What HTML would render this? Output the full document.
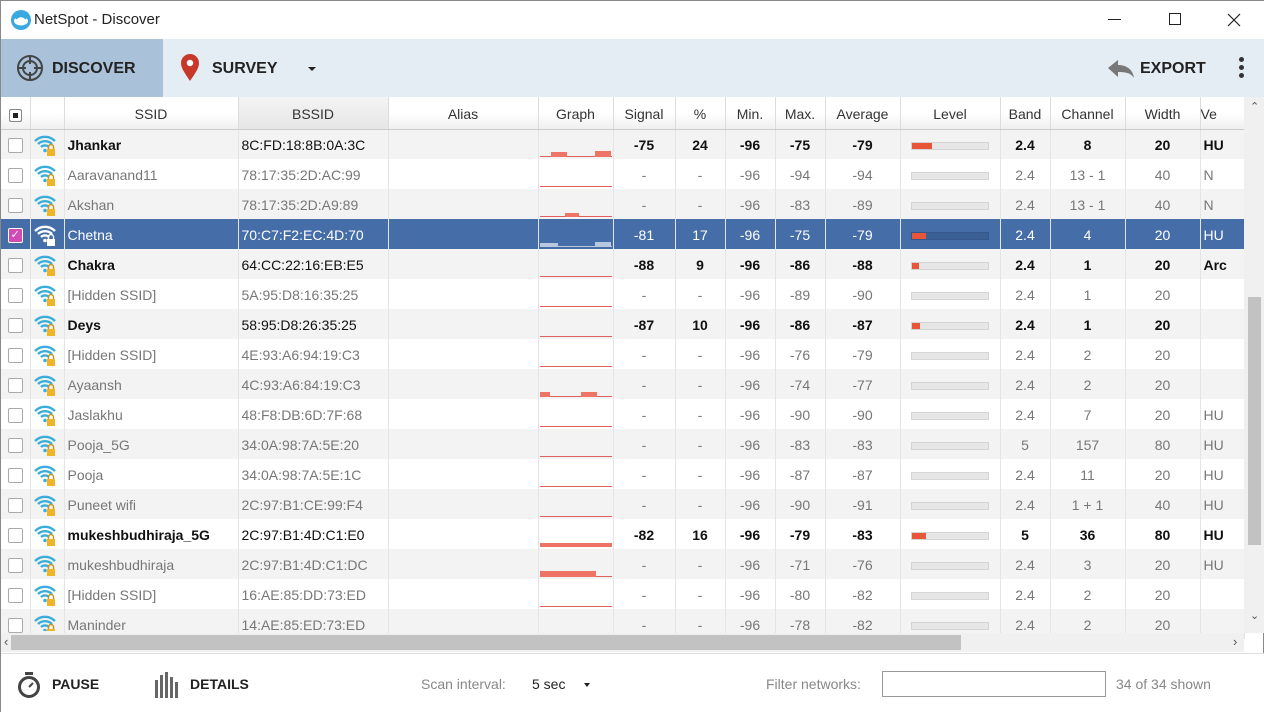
<!DOCTYPE html>
<html><head><meta charset="utf-8">
<style>
*{box-sizing:border-box;margin:0;padding:0}
body{width:1264px;height:712px;overflow:hidden;background:#fff;font-family:"Liberation Sans",sans-serif;position:relative;border:1px solid #888}
.title{position:absolute;left:0;top:0;width:1264px;height:38px;background:#fff}
.title .t{position:absolute;left:33px;top:10px;font-size:15px;color:#222}
.tb{position:absolute;left:0;top:38px;width:1264px;height:58px;background:#e4ecf4}
.disc{position:absolute;left:0;top:0;width:162px;height:58px;background:#a9c2da}
.tbt{position:absolute;top:21px;font-size:16px;font-weight:bold;color:#222}
table{position:absolute;left:0;top:96px;width:1243px;table-layout:fixed;border-collapse:collapse;font-size:14px}
th{height:32px;font-weight:normal;color:#333;background:linear-gradient(#fff 0,#fff 50%,#f0f0f0 100%);border-right:1px solid #ddd;border-bottom:1px solid #ccc;padding-top:3px}
th.s{background:linear-gradient(#f4f4f4,#e6e6e6)}
td{height:30px;border-right:1px solid #e4e4e4;text-align:center;color:#777;white-space:nowrap;overflow:hidden;padding-top:1px}
td.l{text-align:left;padding-left:3px}
tr.a td{color:#111;font-weight:bold}
tr.a td.l{font-weight:bold}
tr.a td.b{font-weight:normal}
tr:nth-child(even) td{background:#f3f3f3}
tr.sel td{background:#456ea9!important;color:#fff!important;font-weight:normal!important}
.cb{display:inline-block;width:15px;height:15px;border:1px solid #aaa;border-radius:2px;background:#fff;vertical-align:middle}
.lv{display:inline-block;width:78px;height:8px;background:#e6e6e6;border:1px solid #d4d4d4;vertical-align:middle;position:relative}
.lv i{position:absolute;left:0;top:0;height:6px;background:#e8563a}
.g{position:relative;height:28px}
.g i{position:absolute;left:1px;right:1px;bottom:2px;height:1px;background:#e06060}
.g b{position:absolute;bottom:2px;background:#ee7565}
.hs{position:absolute;left:0;top:632px;width:1243px;height:19px;background:#f0f0f0}
.vs{position:absolute;left:1243px;top:96px;width:21px;height:536px;background:#f0f0f0}
.bot{position:absolute;left:0;top:652px;width:1264px;height:60px;background:#fff;border-top:1px solid #ddd;font-size:14px}
td:nth-child(2){font-size:0}
</style></head><body>
<div class="title">
<svg style="position:absolute;left:9px;top:8px" width="22" height="22" viewBox="0 0 22 22"><circle cx="11" cy="11" r="10" fill="#3aa8e0"/><ellipse cx="11" cy="12" rx="7" ry="4.5" fill="#fff"/><path d="M6 10q5-5 10 0" stroke="#3aa8e0" stroke-width="1.5" fill="none"/></svg>
<div class="t">NetSpot - Discover</div>
<div style="position:absolute;left:1107px;top:18px;width:13px;height:1px;background:#222"></div>
<div style="position:absolute;left:1168px;top:12px;width:12px;height:12px;border:1px solid #222"></div>
<svg style="position:absolute;left:1226px;top:12px" width="14" height="14"><path d="M1 1L13 13M13 1L1 13" stroke="#222" stroke-width="1.2"/></svg>
</div>
<div class="tb">
<div class="disc"></div>
<svg style="position:absolute;left:15px;top:15px" width="28" height="28" viewBox="0 0 28 28"><circle cx="14" cy="14" r="12" fill="none" stroke="#444" stroke-width="2"/><circle cx="14" cy="14" r="7" fill="none" stroke="#444" stroke-width="2"/><path d="M14 2v8M14 18v8M2 14h8M18 14h8" stroke="#444" stroke-width="2"/></svg>
<div class="tbt" style="left:51px">DISCOVER</div>
<svg style="position:absolute;left:179px;top:15px" width="20" height="28" viewBox="0 0 20 28"><path d="M10 27C4 18 1 14 1 9a9 9 0 0118 0c0 5-3 9-9 18z" fill="#c8382a"/><circle cx="10" cy="9" r="3.2" fill="#fff"/></svg>
<div class="tbt" style="left:211px">SURVEY</div>
<div style="position:absolute;left:307px;top:28px;border:4px solid transparent;border-top:4px solid #222;border-bottom:0"></div>
<svg style="position:absolute;left:1106px;top:20px" width="28" height="20" viewBox="0 0 28 20"><path d="M1 9L11 1v5c9 0 15 5 16 13-3-5-8-6-16-6v5z" fill="#777"/></svg>
<div class="tbt" style="left:1139px">EXPORT</div>
<div style="position:absolute;left:1238px;top:18px;width:5px;height:5px;border-radius:3px;background:#333;box-shadow:0 8px 0 #333,0 16px 0 #333"></div>
</div>
<table>
<colgroup><col style="width:29px"><col style="width:34px"><col style="width:174px"><col style="width:150px"><col style="width:150px"><col style="width:75px"><col style="width:62px"><col style="width:50px"><col style="width:50px"><col style="width:50px"><col style="width:75px"><col style="width:100px"><col style="width:50px"><col style="width:75px"><col style="width:75px"><col style="width:44px"></colgroup>
<tr><th><span class="cb" style="width:13px;height:13px;border-color:#888;box-shadow:inset 0 0 0 3px #fff;background:#222"></span></th><th></th><th>SSID</th><th class="s">BSSID</th><th>Alias</th><th>Graph</th><th>Signal</th><th>%</th><th>Min.</th><th>Max.</th><th>Average</th><th>Level</th><th>Band</th><th>Channel</th><th>Width</th><th style="text-align:left">Ve</th></tr>
<tr class="a"><td><span class="cb"></span></td><td>.</td><td class="l">Jhankar</td><td class="l b">8C:FD:18:8B:0A:3C</td><td></td><td><div class="g"><i></i><b style="left:12px;width:16px;height:5px"></b><b style="left:56px;width:16px;height:6px"></b></div></td><td>-75</td><td>24</td><td>-96</td><td>-75</td><td>-79</td><td><span class="lv"><i style="width:20px"></i></span></td><td>2.4</td><td>8</td><td>20</td><td class="l">HU</td></tr>
<tr><td><span class="cb"></span></td><td>.</td><td class="l">Aaravanand11</td><td class="l">78:17:35:2D:AC:99</td><td></td><td><div class="g"><i></i></div></td><td>-</td><td>-</td><td>-96</td><td>-94</td><td>-94</td><td><span class="lv"></span></td><td>2.4</td><td>13 - 1</td><td>40</td><td class="l">N</td></tr>
<tr><td><span class="cb"></span></td><td>.</td><td class="l">Akshan</td><td class="l">78:17:35:2D:A9:89</td><td></td><td><div class="g"><i></i><b style="left:26px;width:14px;height:4px"></b></div></td><td>-</td><td>-</td><td>-96</td><td>-83</td><td>-89</td><td><span class="lv"></span></td><td>2.4</td><td>13 - 1</td><td>40</td><td class="l">N</td></tr>
<tr class="sel"><td><span class="cb" style="background:#d04ab8;border-color:#fff;color:#fff;font-size:11px;line-height:13px">✓</span></td><td>.</td><td class="l">Chetna</td><td class="l">70:C7:F2:EC:4D:70</td><td></td><td><div class="g"><i style="background:#b8c8e0"></i><b style="left:1px;width:18px;height:4px;background:#b8c8e0"></b><b style="left:56px;width:16px;height:5px;background:#b8c8e0"></b></div></td><td>-81</td><td>17</td><td>-96</td><td>-75</td><td>-79</td><td><span class="lv" style="background:#3a5f94;border-color:#35568a"><i style="width:14px"></i></span></td><td>2.4</td><td>4</td><td>20</td><td class="l">HU</td></tr>
<tr class="a"><td><span class="cb"></span></td><td>.</td><td class="l">Chakra</td><td class="l b">64:CC:22:16:EB:E5</td><td></td><td><div class="g"><i></i></div></td><td>-88</td><td>9</td><td>-96</td><td>-86</td><td>-88</td><td><span class="lv"><i style="width:7px"></i></span></td><td>2.4</td><td>1</td><td>20</td><td class="l">Arc</td></tr>
<tr><td><span class="cb"></span></td><td>.</td><td class="l">[Hidden SSID]</td><td class="l">5A:95:D8:16:35:25</td><td></td><td><div class="g"><i></i></div></td><td>-</td><td>-</td><td>-96</td><td>-89</td><td>-90</td><td><span class="lv"></span></td><td>2.4</td><td>1</td><td>20</td><td></td></tr>
<tr class="a"><td><span class="cb"></span></td><td>.</td><td class="l">Deys</td><td class="l b">58:95:D8:26:35:25</td><td></td><td><div class="g"><i></i></div></td><td>-87</td><td>10</td><td>-96</td><td>-86</td><td>-87</td><td><span class="lv"><i style="width:8px"></i></span></td><td>2.4</td><td>1</td><td>20</td><td></td></tr>
<tr><td><span class="cb"></span></td><td>.</td><td class="l">[Hidden SSID]</td><td class="l">4E:93:A6:94:19:C3</td><td></td><td><div class="g"><i></i></div></td><td>-</td><td>-</td><td>-96</td><td>-76</td><td>-79</td><td><span class="lv"></span></td><td>2.4</td><td>2</td><td>20</td><td></td></tr>
<tr><td><span class="cb"></span></td><td>.</td><td class="l">Ayaansh</td><td class="l">4C:93:A6:84:19:C3</td><td></td><td><div class="g"><i></i><b style="left:1px;width:10px;height:5px"></b><b style="left:42px;width:16px;height:5px"></b></div></td><td>-</td><td>-</td><td>-96</td><td>-74</td><td>-77</td><td><span class="lv"></span></td><td>2.4</td><td>2</td><td>20</td><td></td></tr>
<tr><td><span class="cb"></span></td><td>.</td><td class="l">Jaslakhu</td><td class="l">48:F8:DB:6D:7F:68</td><td></td><td><div class="g"><i></i></div></td><td>-</td><td>-</td><td>-96</td><td>-90</td><td>-90</td><td><span class="lv"></span></td><td>2.4</td><td>7</td><td>20</td><td class="l">HU</td></tr>
<tr><td><span class="cb"></span></td><td>.</td><td class="l">Pooja_5G</td><td class="l">34:0A:98:7A:5E:20</td><td></td><td><div class="g"><i></i></div></td><td>-</td><td>-</td><td>-96</td><td>-83</td><td>-83</td><td><span class="lv"></span></td><td>5</td><td>157</td><td>80</td><td class="l">HU</td></tr>
<tr><td><span class="cb"></span></td><td>.</td><td class="l">Pooja</td><td class="l">34:0A:98:7A:5E:1C</td><td></td><td><div class="g"><i></i></div></td><td>-</td><td>-</td><td>-96</td><td>-87</td><td>-87</td><td><span class="lv"></span></td><td>2.4</td><td>11</td><td>20</td><td class="l">HU</td></tr>
<tr><td><span class="cb"></span></td><td>.</td><td class="l">Puneet wifi</td><td class="l">2C:97:B1:CE:99:F4</td><td></td><td><div class="g"><i></i></div></td><td>-</td><td>-</td><td>-96</td><td>-90</td><td>-91</td><td><span class="lv"></span></td><td>2.4</td><td>1 + 1</td><td>40</td><td class="l">HU</td></tr>
<tr class="a"><td><span class="cb"></span></td><td>.</td><td class="l">mukeshbudhiraja_5G</td><td class="l b">2C:97:B1:4D:C1:E0</td><td></td><td><div class="g"><b style="left:1px;width:72px;height:4px"></b></div></td><td>-82</td><td>16</td><td>-96</td><td>-79</td><td>-83</td><td><span class="lv"><i style="width:14px"></i></span></td><td>5</td><td>36</td><td>80</td><td class="l">HU</td></tr>
<tr><td><span class="cb"></span></td><td>.</td><td class="l">mukeshbudhiraja</td><td class="l">2C:97:B1:4D:C1:DC</td><td></td><td><div class="g"><i></i><b style="left:1px;width:56px;height:6px"></b></div></td><td>-</td><td>-</td><td>-96</td><td>-71</td><td>-76</td><td><span class="lv"></span></td><td>2.4</td><td>3</td><td>20</td><td class="l">HU</td></tr>
<tr><td><span class="cb"></span></td><td>.</td><td class="l">[Hidden SSID]</td><td class="l">16:AE:85:DD:73:ED</td><td></td><td><div class="g"><i></i></div></td><td>-</td><td>-</td><td>-96</td><td>-80</td><td>-82</td><td><span class="lv"></span></td><td>2.4</td><td>2</td><td>20</td><td></td></tr>
<tr><td><span class="cb"></span></td><td>.</td><td class="l">Maninder</td><td class="l">14:AE:85:ED:73:ED</td><td></td><td><div class="g"></div></td><td>-</td><td>-</td><td>-96</td><td>-78</td><td>-82</td><td><span class="lv"></span></td><td>2.4</td><td>2</td><td>20</td><td></td></tr>
</table>
<div class="vs"><div style="position:absolute;left:4px;top:200px;width:13px;height:248px;background:#c2c2c2"></div><div style="position:absolute;left:6px;top:3px;font-size:11px;color:#555">⌃</div><div style="position:absolute;left:6px;top:512px;font-size:11px;color:#555">⌄</div></div>
<div class="hs"><div style="position:absolute;left:10px;top:2px;width:950px;height:15px;background:#c2c2c2"></div><div style="position:absolute;left:3px;top:1px;font-size:13px;color:#555">‹</div><div style="position:absolute;left:1232px;top:1px;font-size:13px;color:#555">›</div></div>
<div class="bot">
<svg style="position:absolute;left:16px;top:17px" width="24" height="28" viewBox="0 0 24 28"><rect x="8" y="1" width="8" height="3" fill="#444"/><circle cx="12" cy="16" r="9.5" fill="none" stroke="#444" stroke-width="3"/><path d="M12 16l4-4" stroke="#444" stroke-width="2"/></svg>
<div style="position:absolute;left:51px;top:22px;font-weight:bold;font-size:14px;color:#222">PAUSE</div>
<svg style="position:absolute;left:153px;top:18px" width="26" height="26" viewBox="0 0 26 26"><g fill="#666"><rect x="1" y="8" width="3" height="18"/><rect x="6" y="3" width="3" height="23"/><rect x="11" y="0" width="3" height="26"/><rect x="16" y="5" width="3" height="21"/><rect x="21" y="10" width="3" height="16"/></g></svg>
<div style="position:absolute;left:189px;top:22px;font-weight:bold;font-size:14px;color:#222">DETAILS</div>
<div style="position:absolute;left:420px;top:22px;color:#888">Scan interval:</div>
<div style="position:absolute;left:531px;top:22px;color:#222">5 sec</div>
<div style="position:absolute;left:583px;top:29px;border:3.5px solid transparent;border-top:4px solid #222;border-bottom:0"></div>
<div style="position:absolute;left:765px;top:22px;color:#888">Filter networks:</div>
<div style="position:absolute;left:881px;top:17px;width:224px;height:26px;border:1px solid #999;background:#fff"></div>
<div style="position:absolute;left:1115px;top:22px;color:#888">34 of 34 shown</div>
</div>
<svg width="0" height="0" style="position:absolute"><defs><g id="w"><path d="M2 8a14 14 0 0120 0M5 11a10 10 0 0114 0M8 14a6 6 0 018 0" stroke="#3aaed8" stroke-width="2.4" fill="none"/><circle cx="12" cy="17.5" r="1.8" fill="#3aaed8"/><rect x="14" y="16" width="8" height="7" fill="#f0b428"/><path d="M15.5 16v-2a2.5 2.5 0 015 0v2" stroke="#c89018" stroke-width="1.4" fill="none"/></g></defs></svg>
<div style="position:absolute;left:0;top:-2px">
<svg style="position:absolute;left:32px;top:134px" width="24" height="24"><use href="#w"/></svg>
<svg style="position:absolute;left:32px;top:164px" width="24" height="24"><use href="#w"/></svg>
<svg style="position:absolute;left:32px;top:194px" width="24" height="24"><use href="#w"/></svg>
<svg style="position:absolute;left:32px;top:224px" width="24" height="24"><g><path d="M2 8a14 14 0 0120 0M5 11a10 10 0 0114 0M8 14a6 6 0 018 0" stroke="#fff" stroke-width="2.4" fill="none"/><circle cx="12" cy="17.5" r="1.8" fill="#fff"/><rect x="14" y="16" width="8" height="7" fill="#fff"/><path d="M15.5 16v-2a2.5 2.5 0 015 0v2" stroke="#fff" stroke-width="1.4" fill="none"/></g></svg>
<svg style="position:absolute;left:32px;top:254px" width="24" height="24"><use href="#w"/></svg>
<svg style="position:absolute;left:32px;top:284px" width="24" height="24"><use href="#w"/></svg>
<svg style="position:absolute;left:32px;top:314px" width="24" height="24"><use href="#w"/></svg>
<svg style="position:absolute;left:32px;top:344px" width="24" height="24"><use href="#w"/></svg>
<svg style="position:absolute;left:32px;top:374px" width="24" height="24"><use href="#w"/></svg>
<svg style="position:absolute;left:32px;top:404px" width="24" height="24"><use href="#w"/></svg>
<svg style="position:absolute;left:32px;top:434px" width="24" height="24"><use href="#w"/></svg>
<svg style="position:absolute;left:32px;top:464px" width="24" height="24"><use href="#w"/></svg>
<svg style="position:absolute;left:32px;top:494px" width="24" height="24"><use href="#w"/></svg>
<svg style="position:absolute;left:32px;top:524px" width="24" height="24"><use href="#w"/></svg>
<svg style="position:absolute;left:32px;top:554px" width="24" height="24"><use href="#w"/></svg>
<svg style="position:absolute;left:32px;top:584px" width="24" height="24"><use href="#w"/></svg>
<svg style="position:absolute;left:32px;top:614px;clip-path:inset(0 0 6px 0)" width="24" height="24"><use href="#w"/></svg>
</div>
</body></html>
